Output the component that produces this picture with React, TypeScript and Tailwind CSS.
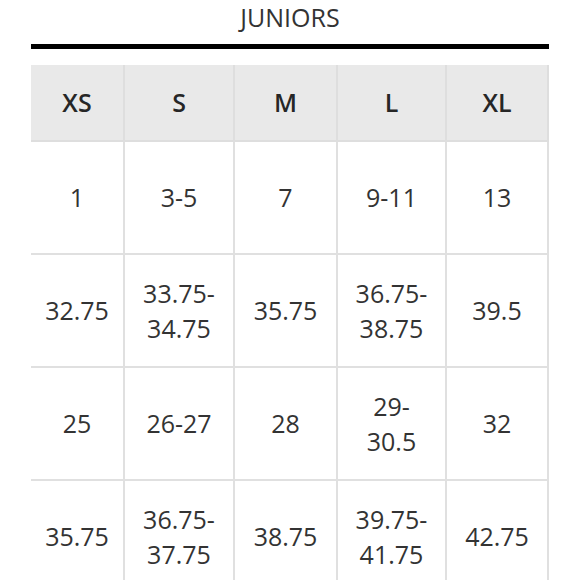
import React from 'react'

const sizes = ['XS', 'S', 'M', 'L', 'XL'];

// Rows of the size chart, one entry per column
const rows: string[][] = [
    ['1', '3-5', '7', '9-11', '13'],
    ['32.75', '33.75-\n34.75', '35.75', '36.75-\n38.75', '39.5'],
    ['25', '26-27', '28', '29-\n30.5', '32'],
    ['35.75', '36.75-\n37.75', '38.75', '39.75-\n41.75', '42.75'],
];

const App = () => {
    return (
        <div className="min-h-screen bg-white overflow-hidden" style={{ fontFamily: '"Open Sans", "Liberation Sans", sans-serif' }}>
            <div className="mx-[31px] w-[518px]">
                {/* Title */}
                <h1 className="text-center text-[25px] leading-[34px] text-[#333] font-normal">JUNIORS</h1>
                <div className="mt-[10px] h-[5px] bg-black" />

                {/* Size table */}
                <div className="mt-[16px] grid grid-cols-[94px_110px_103px_109px_102px] text-[#333]">
                    {sizes.map((s) => (
                        <div
                            key={s}
                            className="h-[77px] flex items-center justify-center bg-[#e9e9e9] border-r-2 border-b-2 border-[#dedede] text-[25px] font-semibold text-[#262626]"
                        >
                            {s}
                        </div>
                    ))}
                    {rows.map((row, i) =>
                        row.map((cell, j) => (
                            <div
                                key={`${i}-${j}`}
                                className="h-[113px] flex items-center justify-center border-r-2 border-b-2 border-[#e0e0e0] text-[25px] leading-[35px] text-center whitespace-pre-line"
                            >
                                {cell}
                            </div>
                        ))
                    )}
                </div>
            </div>
        </div>
    )
}

export default App
